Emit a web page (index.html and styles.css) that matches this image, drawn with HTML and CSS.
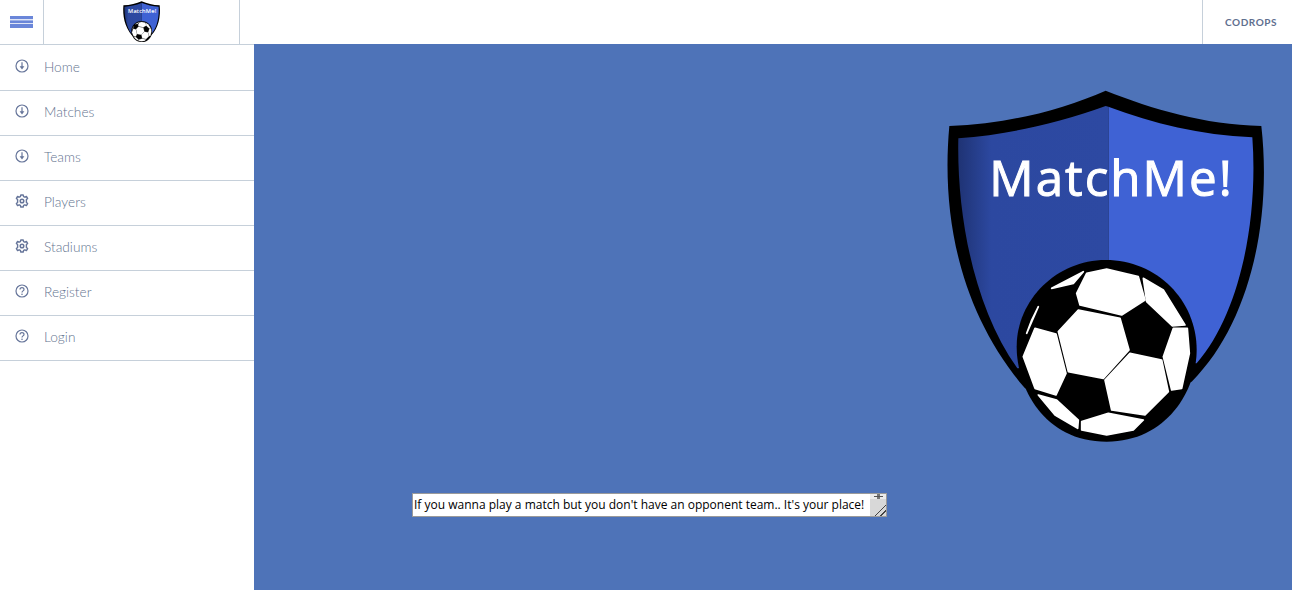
FILE: index.html
```html
<!DOCTYPE html>
<html lang="en">
<head>
<meta charset="utf-8">
<title>MatchMe!</title>
<link rel="stylesheet" href="styles.css">
</head>
<body>
<svg class="defs" width="0" height="0" aria-hidden="true">
  <defs>
    <linearGradient id="shade" x1="0" x2="1" y1="0" y2="0">
      <stop offset="0" stop-color="#1f3374"/>
      <stop offset="0.22" stop-color="#2c48a0"/>
      <stop offset="1" stop-color="#2d49a2"/>
    </linearGradient>
    <symbol id="logo" viewBox="0 0 1050 1110">
      <path fill="#000" d="M527 32C400 88 230 133 58 138C34 400 85 690 285 925L530 1000L785 905C960 730 1026 420 994 138C820 133 670 88 527 32Z"/>
      <path fill="#3f62d4" d="M535 80C670 130 810 165 967 172C985 420 930 700 800 850L535 850Z"/>
      <path fill="url(#shade)" d="M535 80L527 78C380 130 230 165 85 175C80 400 130 680 262 865L535 850Z"/>
      <text class="logo-text" x="178" y="347" textLength="727">MatchMe!</text>
      <path fill="#000" d="M527 540C380 540 260 660 260 800C260 920 340 1085 530 1085C710 1085 800 930 800 810C800 660 680 540 527 540Z"/>
      <g class="panels">
        <path d="M440 640L470 580L530 567L625 590L645 660L575 705L450 675Z"/>
        <path d="M385 755L445 690L570 715L597 810L520 895L415 875Z"/>
        <path d="M640 595L700 630L765 735L727 738L650 665Z"/>
        <path d="M730 745L772 745L778 820L755 925L725 930L700 830Z"/>
        <path d="M600 820L695 840L715 935L645 1005L545 990L525 900Z"/>
        <path d="M315 745L378 762L408 880L378 945L315 925L280 830Z"/>
        <path d="M365 625L460 575L430 610Z"/>
        <path d="M325 680L290 760L305 720Z"/>
        <path d="M325 945L380 960L445 1020L443 1045L375 1005Z"/>
        <path d="M455 1025L535 1000L640 1020L610 1050L530 1065L455 1050Z"/>
      </g>
    </symbol>
    <symbol id="i-down" viewBox="0 0 14 14">
      <circle cx="7" cy="7" r="6" fill="none" stroke="currentColor" stroke-width="1.2"/>
      <path d="M7 3.2V8" fill="none" stroke="currentColor" stroke-width="1.2"/>
      <path d="M4.6 7.200H9.400L7 10.400Z" fill="currentColor"/>
    </symbol>
    <symbol id="i-gear" viewBox="0 0 14 14">
      <path fill="none" stroke="currentColor" stroke-width="1.4" stroke-linejoin="round" d="M5.8 1H8.2L8.600 2.600L9.900 3.200L11.400 2.400L12.600 4.400L11.400 5.600V8.400L12.600 9.600L11.400 11.600L9.900 10.800L8.600 11.400L8.200 13H5.800L5.400 11.400L4.100 10.800L2.600 11.600L1.400 9.600L2.600 8.400V5.600L1.400 4.400L2.600 2.400L4.100 3.200L5.400 2.600Z"/>
      <circle cx="7" cy="7" r="1.800" fill="none" stroke="currentColor" stroke-width="1.500"/>
    </symbol>
    <symbol id="i-help" viewBox="0 0 14 14">
      <circle cx="7" cy="7" r="6" fill="none" stroke="currentColor" stroke-width="1.2"/>
      <path d="M5 5.500C5 3 9 3 9 5.400C9 6.900 7 6.900 7 8.500" fill="none" stroke="currentColor" stroke-width="1.2"/>
      <circle cx="7" cy="10.300" r="0.800" fill="currentColor"/>
    </symbol>
  </defs>
</svg>

<header class="topbar">
  <a class="burger-cell" href="#" aria-label="Menu"><span class="burger"></span></a>
  <a class="brand-cell" href="#" aria-label="MatchMe!"><svg class="brand-logo"><use href="#logo"/></svg></a>
  <div class="spacer"></div>
  <a class="codrops" href="#">CODROPS</a>
</header>

<div class="layout">
  <nav class="sidebar">
    <a class="item" href="#"><svg class="icon"><use href="#i-down"/></svg>Home</a>
    <a class="item" href="#"><svg class="icon"><use href="#i-down"/></svg>Matches</a>
    <a class="item" href="#"><svg class="icon"><use href="#i-down"/></svg>Teams</a>
    <a class="item" href="#"><svg class="icon"><use href="#i-gear"/></svg>Players</a>
    <a class="item" href="#"><svg class="icon"><use href="#i-gear"/></svg>Stadiums</a>
    <a class="item" href="#"><svg class="icon"><use href="#i-help"/></svg>Register</a>
    <a class="item" href="#"><svg class="icon"><use href="#i-help"/></svg>Login</a>
  </nav>
  <main class="main">
    <svg class="hero-logo"><use href="#logo"/></svg>
    <textarea class="blurb" rows="1" cols="60">If you wanna play a match but you don't have an opponent team.. It's your place!</textarea>
  </main>
</div>
</body>
</html>
```

FILE: styles.css
```css
* { box-sizing: border-box; }
html, body { margin: 0; height: 100%; overflow: hidden; }
body { background: #fff; font-family: "Lato", sans-serif; color: #5f6f81; }
a { color: inherit; text-decoration: none; }
.defs { position: absolute; }

.topbar { display: flex; height: 45px; border-bottom: 1px solid #c6d0da; background: #fff; }
.burger-cell { width: 44px; border-right: 1px solid #c6d0da; display: flex; align-items: center; padding-left: 10px; }
.burger { display: block; width: 23px; height: 12px; background: linear-gradient(#6a86d9 0 3px, #dfe5f6 3px 4px, #9db0e6 4px 5px, #6a86d9 5px 7px, #dfe5f6 7px 8px, #6a86d9 8px); }
.brand-cell { width: 196px; border-right: 1px solid #c6d0da; display: flex; justify-content: center; }
.brand-logo { width: 41px; height: 43px; }
.spacer { flex: 1; }
.codrops { width: 90px; border-left: 1px solid #c6d0da; display: flex; align-items: center; padding-left: 22px; font-size: 10px; font-weight: 700; letter-spacing: 0.55px; color: #5f6f8f; }

.layout { display: flex; height: 545px; }
.sidebar { width: 254px; flex: none; background: #fff; padding-top: 1px; }
.item { display: flex; align-items: center; height: 45px; border-bottom: 1px solid #c6d0da; padding: 0 0 3px 15px; font-size: 13.7px; font-weight: 300; gap: 15px; color: #64748f; }
.icon { width: 14px; height: 14px; margin-top: -2px; color: #66759a; }

.main { flex: 1; background: #4e73b8; margin-top: -1px; display: flex; flex-direction: column; padding-top: 36px; }
.hero-logo { width: 350px; height: 370px; align-self: flex-end; margin-right: 12px; filter: blur(0.5px); }
.blurb {
  display: block; width: 475px; height: 24px; margin: 43px 0 0 158px; padding: 1px 1px 0;
  border: 1px solid #9a9a9a; font: 12px/20px "Open Sans", sans-serif; color: #000; overflow-y: scroll;
  background:
    linear-gradient(#555, #555) right 3px top 2px / 9px 1px no-repeat,
    linear-gradient(#777, #777) right 6px top 0 / 3px 5px no-repeat,
    linear-gradient(#d8d8d8, #d8d8d8) right bottom / 16px 17px no-repeat,
    linear-gradient(#ececec, #ececec) right top / 16px 5px no-repeat,
    #fff;
}
.blurb::-webkit-scrollbar { width: 16px; background: transparent; }
.blurb::-webkit-scrollbar-track { background: transparent; }
.blurb::-webkit-resizer { background: linear-gradient(135deg, #d8d8d8 0 62%, #444 62% 66%, #d8d8d8 66% 80%, #444 80% 84%, #d8d8d8 84%); }

.logo-text { fill: #fff; stroke: #fff; stroke-width: 3; font-family: "Open Sans", sans-serif; font-size: 148px; font-weight: 500; }
.panels { fill: #fff; stroke: #fff; stroke-width: 5; stroke-linejoin: round; }
```
